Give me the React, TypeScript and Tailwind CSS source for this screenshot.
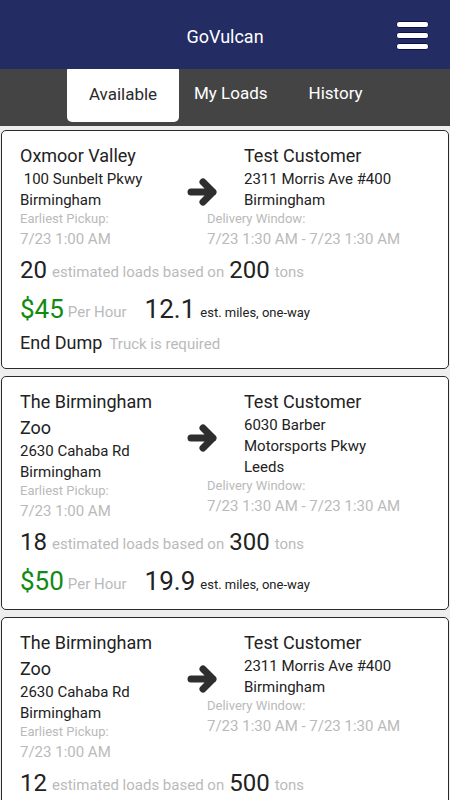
import React from "react";

type Load = {
  fromName: string;
  fromAddr: string;
  fromCity: string;
  pickup: string;
  toName: string;
  toAddr: string;
  toCity: string;
  window: string;
  loads: string;
  tons: string;
  rate: string;
  miles: string;
  truck?: string;
};

const loadsData: Load[] = [
  {
    fromName: "Oxmoor Valley",
    fromAddr: "\u00a0100 Sunbelt Pkwy",
    fromCity: "Birmingham",
    pickup: "7/23 1:00 AM",
    toName: "Test Customer",
    toAddr: "2311 Morris Ave #400",
    toCity: "Birmingham",
    window: "7/23 1:30 AM - 7/23 1:30 AM",
    loads: "20",
    tons: "200",
    rate: "$45",
    miles: "12.1",
    truck: "End Dump",
  },
  {
    fromName: "The Birmingham Zoo",
    fromAddr: "2630 Cahaba Rd",
    fromCity: "Birmingham",
    pickup: "7/23 1:00 AM",
    toName: "Test Customer",
    toAddr: "6030 Barber Motorsports Pkwy",
    toCity: "Leeds",
    window: "7/23 1:30 AM - 7/23 1:30 AM",
    loads: "18",
    tons: "300",
    rate: "$50",
    miles: "19.9",
  },
  {
    fromName: "The Birmingham Zoo",
    fromAddr: "2630 Cahaba Rd",
    fromCity: "Birmingham",
    pickup: "7/23 1:00 AM",
    toName: "Test Customer",
    toAddr: "2311 Morris Ave #400",
    toCity: "Birmingham",
    window: "7/23 1:30 AM - 7/23 1:30 AM",
    loads: "12",
    tons: "500",
    rate: "$40",
    miles: "12.1",
  },
];

function Arrow() {
  return (
    <svg width="32" height="30" viewBox="0 0 32 30" className="absolute left-[-20px] top-[34px]">
      <path
        d="M4 15 H26 M16 5 L26 15 L16 25"
        fill="none"
        stroke="#2e2e2e"
        strokeWidth="7"
        strokeLinecap="round"
        strokeLinejoin="round"
      />
    </svg>
  );
}

function Card({ d }: { d: Load }) {
  return (
    <div className="mx-px mb-[7px] rounded-[5px] border border-[#2a2a2a] bg-white px-[18px] pb-[7px] pt-[12px] text-[#222]">
      <div className="flex">
        <div className="w-[161px] shrink-0">
          <div className="text-[18px] leading-[26px]">{d.fromName}</div>
          <div className="text-[15px] leading-[21px]">{d.fromAddr}</div>
          <div className="text-[15px] leading-[21px]">{d.fromCity}</div>
          <div className="text-[13px] leading-[16px] text-[#bababa]">Earliest Pickup:</div>
          <div className="text-[15px] leading-[25px] text-[#bababa]">{d.pickup}</div>
        </div>
        <div className="relative ml-[26px] w-[200px]">
          <Arrow />
          <div className="w-[193px] pl-[37px]">
            <div className="text-[18px] leading-[26px]">{d.toName}</div>
            <div className="text-[15px] leading-[21px]">{d.toAddr}</div>
            <div className="text-[15px] leading-[21px]">{d.toCity}</div>
          </div>
          <div className="text-[13px] leading-[16px] text-[#bababa]">Delivery Window:</div>
          <div className="whitespace-nowrap text-[15px] leading-[25px] text-[#bababa]">{d.window}</div>
        </div>
      </div>
      <div className="flex h-[36px] items-center whitespace-nowrap">
        <span className="text-[24px] leading-none">{d.loads}</span>
        <span className="ml-[5px] mt-[4px] text-[15px] leading-none text-[#bababa]">estimated loads based on</span>
        <span className="ml-[5px] text-[24px] leading-none">{d.tons}</span>
        <span className="ml-[5px] mt-[4px] text-[15px] leading-none text-[#bababa]">tons</span>
      </div>
      <div className="flex h-[42px] items-center whitespace-nowrap">
        <span className="text-[26px] leading-none text-[#128a12]">{d.rate}</span>
        <span className="ml-[4px] mt-[6px] text-[15px] leading-none text-[#bababa]">Per Hour</span>
        <span className="ml-[18px] text-[26px] leading-none">{d.miles}</span>
        <span className="ml-[5px] mt-[6px] text-[13px] leading-none">est. miles, one-way</span>
      </div>
      {d.truck && (
        <div className="mb-[5px] flex h-[26px] items-center whitespace-nowrap">
          <span className="text-[18px] leading-none">{d.truck}</span>
          <span className="ml-[7px] mt-[2px] text-[15px] leading-none text-[#bababa]">Truck is required</span>
        </div>
      )}
    </div>
  );
}

export default function App() {
  return (
    <div className="min-h-[800px] bg-[#eeeeee] font-['Roboto',sans-serif]">
      <header className="relative flex h-[69px] items-center justify-center bg-[#232d63] pt-[4px]">
        <span className="text-[18px] text-white">GoVulcan</span>
        <div className="absolute right-[21px] top-[21px] flex flex-col gap-[4px]">
          <div className="h-[7px] w-[33px] rounded-[3px] border border-[#0c0f4d] bg-white" />
          <div className="h-[7px] w-[33px] rounded-[3px] border border-[#0c0f4d] bg-white" />
          <div className="h-[7px] w-[33px] rounded-[3px] border border-[#0c0f4d] bg-white" />
        </div>
      </header>
      <nav className="flex h-[57px] items-start bg-[#444444] pl-[67px] text-[17px]">
        <div className="-mt-px flex h-[54px] w-[112px] items-center justify-center rounded-b-[5px] rounded-t-[2px] bg-white text-[#2a2a2a]">
          Available
        </div>
        <div className="ml-[15px] flex h-[50px] items-center text-white">My Loads</div>
        <div className="ml-[41px] flex h-[50px] items-center text-white">History</div>
      </nav>
      <main className="pt-[4px]">
        {loadsData.map((d, i) => (
          <Card key={i} d={d} />
        ))}
      </main>
    </div>
  );
}
